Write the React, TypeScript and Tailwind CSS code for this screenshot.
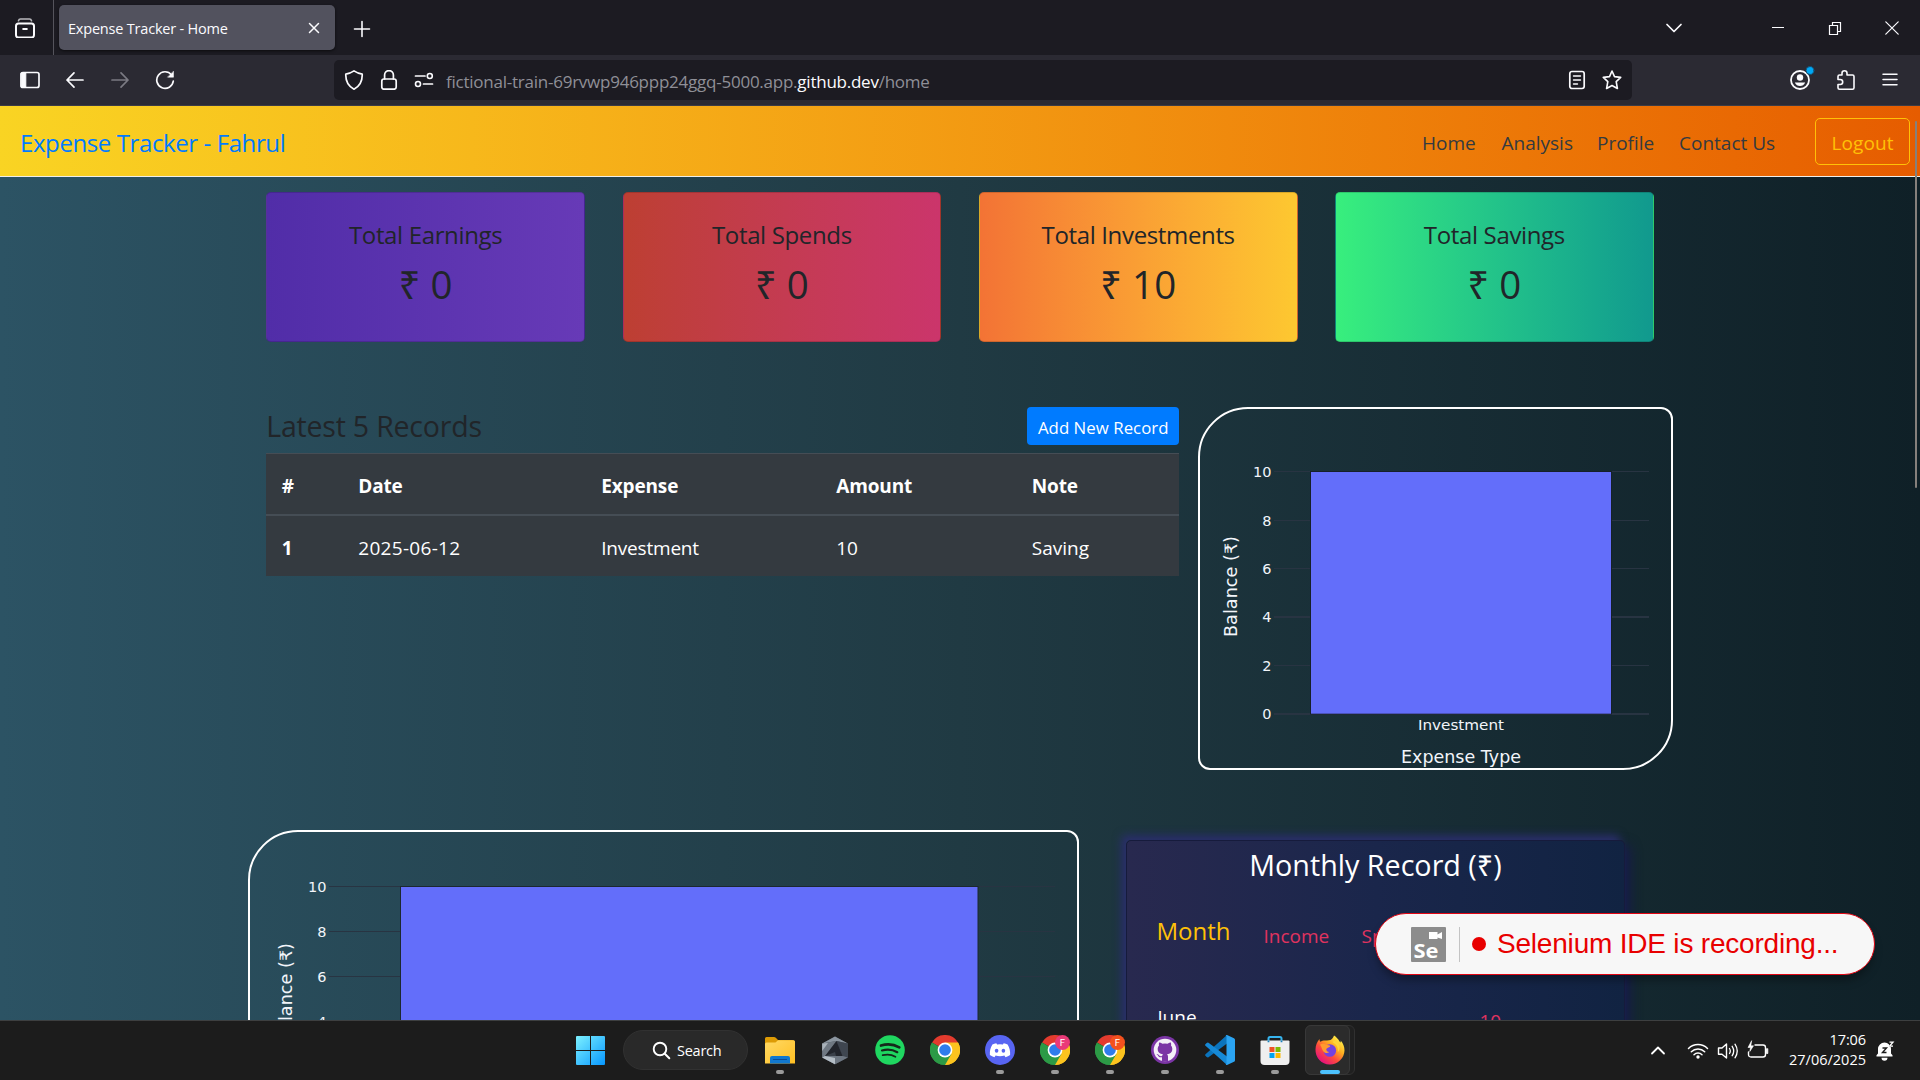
import React from "react";

const line = {
  fill: "none",
  stroke: "currentColor",
  strokeWidth: 1.6,
  strokeLinecap: "round" as const,
  strokeLinejoin: "round" as const,
};

function Icon({ size = 20, className = "", children }: { size?: number; className?: string; children: React.ReactNode }) {
  return (
    <svg width={size} height={size} viewBox={`0 0 ${size} ${size}`} className={`block shrink-0 ${className}`} {...line}>
      {children}
    </svg>
  );
}

function Slot({ className, children }: { className: string; children: React.ReactNode }) {
  return <div className={`flex shrink-0 items-center justify-center ${className}`}>{children}</div>;
}

function TabBar() {
  return (
    <div className="flex h-[55px] bg-[#1c1b22] text-[#fbfbfe]">
      <div className="flex w-[54px] shrink-0 items-center border-r border-[#55545c] pl-[15px]">
        <Icon size={20}>
          <path d="M3.5 2.8C3.8 1.6 4.3 1 5.5 1h9c1.200 0 1.700.6 2 1.800" stroke="#b9b9bd" />
          <rect x="1" y="5.500" width="18" height="14" rx="2.500" strokeWidth="2" />
          <path d="M8.200 11h3.600" strokeWidth="2" />
        </Icon>
      </div>
      <div className="mt-[5px] ml-[5px] flex h-[45px] w-[276px] items-center rounded-[5px] bg-[#52525e] pl-[9px] shadow-[0_1px_3px_rgba(0,0,0,0.6)]">
        <span className="w-[239px] pt-[2px] text-[14.5px] tracking-[-0.2px] whitespace-nowrap">Expense Tracker - Home</span>
        <Icon size={14}>
          <path d="M2.500 2.500l9 9m0-9l-9 9" strokeWidth="1.500" />
        </Icon>
      </div>
      <Slot className="ml-[16px] w-[21px]">
        <Icon size={18} className="mt-[2px]">
          <path d="M9 1.500v15M1.500 9h15" />
        </Icon>
      </Slot>
      <div className="flex-1" />
      <Slot className="mr-[84px] w-[20px]">
        <Icon size={18}>
          <path d="M2 5.500l7 7 7-7" strokeWidth="1.700" />
        </Icon>
      </Slot>
      <Slot className="mr-[37px] w-[20px]">
        <Icon size={14}>
          <path d="M1 6.500h12" strokeWidth="1" strokeLinecap="butt" />
        </Icon>
      </Slot>
      <Slot className="mr-[37px] w-[20px]">
        <Icon size={14}>
          <path d="M1.500 4.500h8v9h-8zM4.500 4.500v-3h8v9h-3" strokeWidth="1.200" strokeLinejoin="miter" />
        </Icon>
      </Slot>
      <Slot className="mr-[18px] w-[20px]">
        <Icon size={14}>
          <path d="M.8 .8l12.400 12.400m0-12.400L.8 13.200" strokeWidth="1.200" />
        </Icon>
      </Slot>
    </div>
  );
}

function AddressBar() {
  return (
    <div className="flex h-[51px] items-start border-b border-[#3c3b45] bg-[#2b2a33] text-[#fbfbfe]">
      <Slot className="ml-[20px] h-[50px] w-[20px]">
        <Icon size={20}>
          <rect x="1" y="2.500" width="18" height="15" rx="2" strokeWidth="1.700" />
          <path d="M1.500 3h4.300v14H1.500z" fill="currentColor" strokeWidth="1" />
        </Icon>
      </Slot>
      <Slot className="ml-[25px] h-[50px] w-[20px]">
        <Icon size={20}>
          <path d="M18 10H2m7-7.200L2 10l7 7.200" strokeWidth="1.700" />
        </Icon>
      </Slot>
      <Slot className="ml-[25px] h-[50px] w-[20px]">
        <Icon size={20} className="text-[#7b7a83]">
          <path d="M2 10h16M11 2.800l7 7.200-7 7.200" strokeWidth="1.700" />
        </Icon>
      </Slot>
      <Slot className="ml-[25px] h-[50px] w-[20px]">
        <Icon size={20}>
          <path d="M16.500 4.800A8.300 8.300 0 1 0 18.300 11" strokeWidth="1.700" />
          <path d="M18.500 1.500v5.700h-5.700z" fill="currentColor" strokeWidth=".5" />
        </Icon>
      </Slot>
      <div className="mt-[5px] ml-[159px] flex h-[40px] w-[1298px] items-center rounded-[5px] bg-[#1c1b22]">
        <Slot className="ml-[10px] w-[20px]">
          <Icon size={20}>
            <path d="M10 .9c2.500 1.700 5 2.800 8.200 3.300C18.500 11 16 16 10 19.200 4 16 1.500 11 1.800 4.200 5 3.700 7.500 2.600 10 .9z" strokeWidth="1.700" />
          </Icon>
        </Slot>
        <Slot className="ml-[15px] w-[20px]">
          <Icon size={20}>
            <rect x="2.800" y="9" width="14.400" height="10.200" rx="2.200" strokeWidth="1.700" />
            <path d="M5.600 9V5a4.400 4.400 0 0 1 8.800 0v4" strokeWidth="1.700" />
          </Icon>
        </Slot>
        <Slot className="ml-[15px] w-[20px]">
          <Icon size={20}>
            <path d="M1.500 6h9.500M9.500 14h9" strokeWidth="1.700" />
            <circle cx="15.800" cy="6" r="2.500" strokeWidth="1.600" />
            <circle cx="4" cy="14" r="2.500" strokeWidth="1.600" />
          </Icon>
        </Slot>
        <div className="ml-[12px] w-[1121px] pt-[3px] text-[17px] tracking-[-0.24px] whitespace-nowrap text-[#8f8f97]">
          fictional-train-69rvwp946ppp24ggq-5000.app.<span className="text-[#fbfbfe]">github.dev</span>/home
        </div>
        <Slot className="w-[20px]">
          <Icon size={20}>
            <rect x="2.800" y="1.500" width="14.400" height="17" rx="2.200" strokeWidth="1.700" />
            <path d="M6.500 6h7M6.500 10h7M6.500 14h4" strokeWidth="1.400" />
          </Icon>
        </Slot>
        <Slot className="ml-[15px] w-[20px]">
          <Icon size={20}>
            <path d="M10 1l2.500 5.600 6.200.8-4.500 4.200 1.200 6.900L10 15.500l-5.400 3 1.200-6.900L1.300 7.400l6.200-.8z" strokeWidth="1.600" />
          </Icon>
        </Slot>
      </div>
      <Slot className="ml-[156px] h-[50px] w-[24px]">
        <Icon size={26} className="-mt-[4px] ml-[4px]">
          <circle cx="11" cy="15" r="9" strokeWidth="1.800" />
          <circle cx="11" cy="12.500" r="3.200" fill="currentColor" stroke="none" />
          <path d="M5.800 17.500h10.400c-1 2.400-3 3.600-5.200 3.600s-4.200-1.200-5.200-3.600z" fill="currentColor" stroke="none" />
          <circle cx="21" cy="5.500" r="4" fill="#00a8f5" stroke="#174e70" strokeWidth="1" />
        </Icon>
      </Slot>
      <Slot className="ml-[24px] h-[50px] w-[20px]">
        <Icon size={20}>
          <path d="M2 8V6.500Q2 5 3.500 5H6V3.300a2.500 2.500 0 0 1 5 0V5h5.500Q18 5 18 6.500v11.200q0 1.500-1.500 1.500h-13Q2 19.200 2 17.700V14.500h2.200a2.300 2.300 0 0 0 0-5H2z" strokeWidth="1.600" />
        </Icon>
      </Slot>
      <Slot className="ml-[24px] h-[50px] w-[20px]">
        <Icon size={20}>
          <path d="M3 4.300h14M3 9.500h14M3 14.700h14" strokeWidth="1.500" />
        </Icon>
      </Slot>
    </div>
  );
}

function Navbar() {
  return (
    <div className="flex h-[71px] items-center border-b border-[#f1efe9] bg-linear-to-r from-[#f9d423] to-[#e65c00] text-[19px] whitespace-nowrap text-[#343a40]">
      <div className="ml-[20px] w-[1402px] pt-[3px] text-[24px] tracking-[-0.4px] text-[#007bff]">Expense Tracker - Fahrul</div>
      <div className="w-[79.500px] pt-[5px]">Home</div>
      <div className="w-[95.500px] pt-[5px]">Analysis</div>
      <div className="w-[82px] pt-[5px]">Profile</div>
      <div className="w-[136px] pt-[5px]">Contact Us</div>
      <div className="flex h-[47px] w-[95px] items-center justify-center rounded-[5px] border border-[#ffc107] pt-[5px] tracking-[0.1px] text-[#ffc107]">
        Logout
      </div>
    </div>
  );
}

const totals = [
  { title: "Total Earnings", value: "₹ 0", tone: "from-[#512da8] to-[#673ab7]" },
  { title: "Total Spends", value: "₹ 0", tone: "from-[#bd3f32] to-[#cb356b]" },
  { title: "Total Investments", value: "₹ 10", tone: "from-[#f37335] to-[#fdc830]" },
  { title: "Total Savings", value: "₹ 0", tone: "from-[#38ef7d] to-[#11998e]" },
];

function TotalCards() {
  return (
    <div className="grid grid-cols-4 gap-[37.5px] px-[18.75px] pt-[15px] text-center text-[#212529]">
      {totals.map((t) => (
        <div key={t.title} className={`h-[150px] rounded-[5px] border border-black/15 bg-linear-to-r pt-[23px] ${t.tone}`}>
          <div className="text-[24px] leading-[38px] tracking-[-0.35px]">{t.title}</div>
          <div className="text-[38.500px] leading-[60px]">{t.value}</div>
        </div>
      ))}
    </div>
  );
}

function Records() {
  const cols = "grid grid-cols-[76.500px_243px_235px_195.500px_1fr] items-center pl-[15.500px]";
  return (
    <div className="w-[913px] shrink-0">
      <div className="flex h-[46px] items-start justify-between">
        <div className="text-[28.500px] leading-[39px] tracking-[-0.2px] text-[#212529]">Latest 5 Records</div>
        <div className="flex h-[38px] w-[152px] items-center justify-center rounded-[4px] bg-[#007bff] pt-[4px] text-[16.800px] tracking-[0.05px] whitespace-nowrap text-white">
          Add New Record
        </div>
      </div>
      <div className="border-t border-[#454d55] bg-[#343a40] text-[19px] text-white">
        <div className={`h-[62px] border-b-2 border-[#454d55] pt-[4px] font-bold tracking-[-0.15px] ${cols}`}>
          <div>#</div>
          <div>Date</div>
          <div>Expense</div>
          <div>Amount</div>
          <div>Note</div>
        </div>
        <div className={`h-[60px] pt-[4px] ${cols}`}>
          <div className="font-bold">1</div>
          <div className="tracking-[0.3px]">2025-06-12</div>
          <div className="tracking-[-0.2px]">Investment</div>
          <div>10</div>
          <div>Saving</div>
        </div>
      </div>
    </div>
  );
}

const verdana = "Verdana, 'DejaVu Sans', sans-serif";

function ExpenseTypeChart() {
  const ticks: [string, number][] = [["10", 64.500], ["8", 113.500], ["6", 161.500], ["4", 210], ["2", 258.500], ["0", 307]];
  return (
    <div className="h-[363px] w-[475px] shrink-0 overflow-hidden rounded-tl-[50px] rounded-tr-[12px] rounded-br-[50px] rounded-bl-[12px] border-2 border-white">
      <svg width="475" height="363" viewBox="0 0 475 363" className="-mt-[2px] -ml-[2px] block max-w-none" fontFamily={verdana} fill="#f2f5fa">
        {ticks.map(([t, y]) => (
          <g key={t}>
            <path d={`M76 ${y}H451`} stroke="#283442" strokeWidth={t === "0" || t === "4" ? 2 : 1} />
            <text x="73.500" y={y + 5} textAnchor="end" fontSize="14.500" textLength={t === "10" ? 18.500 : 9}>{t}</text>
          </g>
        ))}
        <rect x="112.500" y="64.500" width="301" height="242.500" fill="#636efa" stroke="#16202a" strokeWidth="1" />
        <path d="M113 306.500H413" stroke="#4a53b8" />
        <text x="263" y="323" textAnchor="middle" fontSize="14.500" textLength="86" lengthAdjust="spacingAndGlyphs">Investment</text>
        <text x="263" y="356" textAnchor="middle" fontSize="17" textLength="120" lengthAdjust="spacingAndGlyphs">Expense Type</text>
        <text transform="translate(39 179.500) rotate(-90)" textAnchor="middle" fontSize="17" textLength="101" lengthAdjust="spacingAndGlyphs">Balance (₹)</text>
      </svg>
    </div>
  );
}

function MonthlyChart() {
  const ticks: [string, number][] = [["10", 56.500], ["8", 101.500], ["6", 146.500], ["4", 191.500]];
  return (
    <div className="h-[363px] w-[831px] shrink-0 overflow-hidden rounded-tl-[50px] rounded-tr-[12px] border-2 border-white">
      <svg width="831" height="363" viewBox="0 0 831 363" className="-mt-[2px] -ml-[2px] block max-w-none" fontFamily={verdana} fill="#f2f5fa">
        {ticks.map(([t, y]) => (
          <g key={t}>
            <path d={`M81 ${y}H807`} stroke="#283442" />
            <text x="78.500" y={y + 5} textAnchor="end" fontSize="14.500" textLength={t === "10" ? 18.500 : 9}>{t}</text>
          </g>
        ))}
        <rect x="152.500" y="56.500" width="577.500" height="290" fill="#636efa" stroke="#1c2830" />
        <text transform="translate(44 163.500) rotate(-90)" textAnchor="middle" fontSize="17" textLength="101" lengthAdjust="spacingAndGlyphs">Balance (₹)</text>
      </svg>
    </div>
  );
}

function MonthlyRecord() {
  return (
    <div className="mt-[10px] ml-[47px] h-[300px] w-[499px] shrink-0 rounded-[5px] border border-[#161b3c] bg-linear-to-r from-[#28294f] via-[#1a264b] to-[#112342] whitespace-nowrap shadow-[-5px_-5px_9px_#2a2f6a,5px_5px_12px_#171b4a]">
      <div className="pt-[2px] pl-px text-center text-[28.700px] leading-[43px] text-white">Monthly Record (₹)</div>
      <div className="mt-[25px] flex h-[44px] items-start pl-[30px] text-[19px] leading-[40px] text-[#e0335f]">
        <div className="w-[107px] text-[24px] text-[#ffc107]">Month</div>
        <div className="w-[98px] pt-[5px]">Income</div>
        <div className="pt-[5px]">Spend</div>
      </div>
      <div className="mt-[42px] flex items-start pl-[31px] text-[19px] leading-[40px]">
        <div className="w-[322px] text-white">June</div>
        <div className="pt-[4px] text-[#e0335f]">10</div>
      </div>
    </div>
  );
}

function RecordingBadge() {
  return (
    <div className="absolute top-[913px] left-[1375px] flex h-[62px] w-[500px] items-center rounded-full border border-[#e30613] bg-[#f7f7f7] pl-[35px] shadow-[0_7px_10px_-2px_rgba(0,0,0,0.35)]">
      <svg width="35" height="35" viewBox="0 0 35 35" className="block">
        <rect width="35" height="35" rx="1" fill="#8c8c8c" />
        <path d="M18 5h8.500v2.500l4.500-2.500v7l-4.500-1.500V12H18z" fill="#fff" />
        <text x="2.500" y="30.500" fontSize="20" fontWeight="700" fontFamily="'Open Sans', sans-serif" fill="#fff" textLength="25" lengthAdjust="spacingAndGlyphs">Se</text>
      </svg>
      <div className="ml-[13px] h-[35px] w-px bg-[#c4c4c4]" />
      <div className="ml-[12px] size-[14px] rounded-full bg-[#e80000]" />
      <div className="ml-[11px] text-[28px] tracking-[-0.2px] whitespace-nowrap text-[#e80000] [font-family:'Liberation_Sans',Arial,sans-serif]">
        Selenium IDE is recording...
      </div>
    </div>
  );
}

function ChromeIcon({ badge }: { badge?: string }) {
  return (
    <svg width="30" height="30" viewBox="0 0 30 30">
      <path d="M15 15L2 7.500A15 15 0 0 1 28 7.500z" fill="#e33b2e" />
      <path d="M15 15L28 7.500A15 15 0 0 1 15 30z" fill="#fcc31e" />
      <path d="M15 15V30A15 15 0 0 1 2 7.500z" fill="#2c9a46" />
      <path d="M15 7.500H28A15 15 0 0 1 15 30l6.500-11.200z" fill="#fcc31e" />
      <path d="M2 7.500l6.500 11.300L15 22l6.500-3.200L15 30A15 15 0 0 1 2 7.500z" fill="#2c9a46" />
      <circle cx="15" cy="15" r="7.400" fill="#fff" />
      <circle cx="15" cy="15" r="5.800" fill="#2f7cec" />
      {badge && (
        <>
          <circle cx="22.500" cy="7.500" r="7.500" fill={badge} />
          <text x="22.500" y="11" textAnchor="middle" fontSize="9.500" fontFamily="Roboto, sans-serif" fill="#fff">F</text>
        </>
      )}
    </svg>
  );
}

function FolderIcon() {
  return (
    <svg width="30" height="30" viewBox="0 0 30 30">
      <defs>
        <linearGradient id="folder" x1="0" y1="0" x2="1" y2="1">
          <stop offset="0" stopColor="#ffd965" />
          <stop offset="1" stopColor="#ffbf22" />
        </linearGradient>
      </defs>
      <path d="M0 3.500Q0 2 1.500 2H9q1 0 1.800.8L13 5H27q3 0 3 3v5H0z" fill="#dd9b05" />
      <path d="M0 9q0-1.500 1.500-1.500h9L13 5.300h15.500Q30 5.300 30 6.800V28.500H0z" fill="url(#folder)" />
      <path d="M5 28.500V23q0-2 2-2h16q2 0 2 2v5.500z" fill="#1178cf" />
      <path d="M8.500 24.500h13" stroke="#0b4c97" strokeWidth="1.200" strokeLinecap="round" />
    </svg>
  );
}

function CubeIcon() {
  return (
    <svg width="30" height="30" viewBox="0 0 30 30">
      <path d="M15 1.500L27.800 8.500v14L15 29.200 2.200 22.500v-14z" fill="#4c545e" />
      <path d="M15 1.500L27.800 8.500 16.500 6 2.200 8.500z" fill="#8b959f" />
      <path d="M2.200 8.500L16.500 6 5.500 21l-3.300 1.500z" fill="#6f7882" />
      <path d="M2.200 8.500L8 8l-5.800 8z" fill="#a9b2ba" />
      <path d="M16.500 6l11.300 2.500v14L22 20.500z" fill="#3f4650" />
      <path d="M16.500 6L22.500 21 5 21z" fill="#22252c" />
      <path d="M5 21l10-4 1.500 6z" fill="#3a4049" />
      <path d="M5 21L22.500 21l5.300 1.500L15 29.200 2.200 22.500z" fill="#6d7681" />
      <path d="M2.200 22.500L15 29.200V23L5 21z" fill="#b4bdc5" />
    </svg>
  );
}

function SpotifyIcon() {
  return (
    <svg width="30" height="30" viewBox="0 0 30 30" fill="none" stroke="#15291b" strokeLinecap="round">
      <circle cx="15" cy="15" r="14.800" fill="#1fd760" stroke="none" />
      <path d="M6 10.500c6-1.800 13-1.200 18.300 1.800" strokeWidth="2.700" />
      <path d="M7 15.500c5-1.400 10.800-.9 15.300 1.700" strokeWidth="2.200" />
      <path d="M7.700 20.200c4.200-1.100 9-.7 12.700 1.500" strokeWidth="1.800" />
    </svg>
  );
}

function DiscordIcon() {
  return (
    <svg width="30" height="30" viewBox="0 0 30 30">
      <circle cx="15" cy="15" r="15" fill="#5865f2" />
      <path d="M11.300 8.300l.8 1.300a15 15 0 0 1 5.800 0l.8-1.300c1.400.2 2.700.7 3.900 1.300 2 3.200 2.800 6.500 2.500 10.500-1.400 1.100-2.900 1.800-4.600 2.200l-1.100-1.700a14 14 0 0 1-8.800 0l-1.100 1.700c-1.700-.4-3.200-1.100-4.600-2.200-.3-4 .5-7.300 2.500-10.500a13 13 0 0 1 3.900-1.300z" fill="#fff" />
      <ellipse cx="11.600" cy="15.700" rx="1.800" ry="2" fill="#5865f2" />
      <ellipse cx="18.400" cy="15.700" rx="1.800" ry="2" fill="#5865f2" />
    </svg>
  );
}

function GithubIcon() {
  return (
    <svg width="30" height="30" viewBox="0 0 30 30">
      <circle cx="15" cy="15" r="14" fill="#7b35a5" />
      <circle cx="15" cy="15" r="11.300" fill="#f4f0f7" />
      <path d="M12 26v-3.800c-2.500.5-3.500-.6-4.200-2l-1.300-1.100c1.300-.3 2 .7 2.700 1.500.8.9 1.900.8 2.900.4.100-.8.500-1.300.9-1.700-3.200-.4-5.300-1.800-5.300-5.300 0-1.400.5-2.500 1.300-3.400-.3-1-.2-2.300.2-3.200 1.200 0 2.300.7 3.200 1.300a11 11 0 0 1 5.200 0c.9-.6 2-1.300 3.200-1.300.4.900.5 2.200.2 3.200.8.900 1.300 2 1.300 3.400 0 3.500-2.100 4.900-5.300 5.300.6.500 1 1.300 1 2.500V26q-3 .8-6 0z" fill="#7b35a5" />
    </svg>
  );
}

function CodeIcon() {
  return (
    <svg width="30" height="30" viewBox="0 0 30 30">
      <path d="M22 0L22 8.500 3.500 22.300Q2.500 22.800 1.700 22L.4 20.800Q-.3 20 .5 19.200z" fill="#0b74bd" />
      <path d="M22 30V21.500L3.500 7.700Q2.500 7.200 1.700 8L.4 9.200Q-.3 10 .5 10.800z" fill="#1689d6" />
      <path d="M22 0l7 3.200q1 .5 1 1.600v20.400q0 1.100-1 1.600L22 30q-.8.200-1.300-.5l.8-.5V1l-.8-.5Q21.200-.2 22 0z" fill="#2ba4f2" />
    </svg>
  );
}

function StoreIcon() {
  return (
    <svg width="30" height="30" viewBox="0 0 30 30">
      <path d="M8.500 7V3.500Q8.500 2 10 2h10q1.500 0 1.500 1.500V7" fill="none" stroke="#36b4ee" strokeWidth="2" />
      <path d="M.5 6.500Q.5 5.500 1.500 5.500h27q1 0 1 1V26q0 4-4 4h-21q-4 0-4-4z" fill="#efefef" />
      <path d="M8.500 5.500v1.800M21.500 5.500v1.800" stroke="#1a7fb8" strokeWidth="1.800" />
      <path d="M9.500 12h5v5h-5z" fill="#f05123" />
      <path d="M15.500 12h5v5h-5z" fill="#7eb900" />
      <path d="M9.500 18h5v5h-5z" fill="#01a3ee" />
      <path d="M15.500 18h5v5h-5z" fill="#fdb800" />
    </svg>
  );
}

function FirefoxIcon() {
  return (
    <svg width="30" height="30" viewBox="0 0 30 30">
      <defs>
        <linearGradient id="fox" x1=".85" y1=".1" x2=".2" y2=".9">
          <stop offset="0" stopColor="#fff14a" />
          <stop offset=".35" stopColor="#ffab1f" />
          <stop offset=".65" stopColor="#ff4b3d" />
          <stop offset="1" stopColor="#e6137c" />
        </linearGradient>
      </defs>
      <path d="M19 .5c4.500 3 5 5.500 6.500 7 .3-.8.300-1.500.2-2 2.500 2.500 3.800 6.500 3.800 10A14.500 14.500 0 1 1 .5 14.500C.6 10.500 2 6.500 4.500 4c0 1.300.2 2 .8 2.800C7 5.700 9 5.300 11 5.500c2 .2 3.500-.2 4.500-.5 1.500-1 2.800-2.500 3.500-4.500z" fill="url(#fox)" />
      <circle cx="14.800" cy="15.500" r="6.300" fill="#7542e0" />
      <path d="M5 9.500c2.500-1 4.500-.8 6 .2 1.600.3 4 .6 4.300 1.300-.4 1.500-3.500 1.800-4 3-.3 1.500 1 3 3 3-1.800 2-5 1-6.300-1C7 14 6.500 12 5 9.500z" fill="#ff9a2e" />
      <path d="M18 7.500c3.500 1.500 5.500 5 4.800 9.500 1.500-1 2.200-3.500 1.700-6-.8-3-3.500-5-6-5z" fill="#ffd53a" />
    </svg>
  );
}

function WindowsIcon() {
  return (
    <svg width="29" height="29" viewBox="0 0 29 29">
      <defs>
        <linearGradient id="win" x1="0" y1="0" x2="29" y2="29" gradientUnits="userSpaceOnUse">
          <stop offset="0" stopColor="#7df1ff" />
          <stop offset="1" stopColor="#0797ff" />
        </linearGradient>
      </defs>
      <path d="M0 1q0-1 1-1h13v14H0zM15 0h13q1 0 1 1v13H15zM0 15h14v14H1q-1 0-1-1zM15 15h14v13q0 1-1 1H15z" fill="url(#win)" />
    </svg>
  );
}

const apps: { node: React.ReactNode; running?: boolean }[] = [
  { node: <FolderIcon />, running: true },
  { node: <CubeIcon /> },
  { node: <SpotifyIcon /> },
  { node: <ChromeIcon /> },
  { node: <DiscordIcon />, running: true },
  { node: <ChromeIcon badge="#ea3a78" />, running: true },
  { node: <ChromeIcon badge="#f4511e" />, running: true },
  { node: <GithubIcon />, running: true },
  { node: <CodeIcon />, running: true },
  { node: <StoreIcon />, running: true },
];

function Taskbar() {
  return (
    <div className="flex h-[60px] items-start border-t border-[#3d3f40] bg-[#1c1c1c] text-white">
      <div className="mt-[15px] ml-[576px]"><WindowsIcon /></div>
      <div className="mt-[9px] ml-[18px] flex h-[40px] w-[125px] items-center rounded-full border border-[#313131] bg-[#292929] pl-[28px]">
        <Icon size={19}>
          <circle cx="8" cy="8" r="6.300" strokeWidth="1.900" />
          <path d="M12.800 12.800l4.500 4.500" strokeWidth="2" />
        </Icon>
        <span className="ml-[6px] pt-[2px] text-[14.500px] tracking-[-0.25px]">Search</span>
      </div>
      <div className="ml-[4.500px] flex">
        {apps.map((a, i) => (
          <div key={i} className="flex h-[59px] w-[55px] flex-col items-center pt-[14px]">
            {a.node}
            {a.running && <div className="mt-[5px] h-[4px] w-[8px] rounded-full bg-[#9a9a9a]" />}
          </div>
        ))}
      </div>
      <div className="mt-[4px] ml-[2.500px] h-[50px] w-[50px] rounded-[6px] border border-[#303030] bg-[#202020]">
        <div className="-mt-px -ml-px flex h-[50px] w-[45px] flex-col items-center rounded-[6px] border border-[#383838] bg-[#2b2b2b] pt-[9px] pl-[4px]">
          <FirefoxIcon />
          <div className="mt-[5px] h-[4px] w-[20px] rounded-full bg-[#4cc2ff]" />
        </div>
      </div>
      <div className="flex-1" />
      <Slot className="h-[59px] w-[20px]">
        <Icon size={16}>
          <path d="M2 10.500l6-6 6 6" strokeWidth="1.800" />
        </Icon>
      </Slot>
      <Slot className="ml-[20px] h-[59px] w-[20px]">
        <Icon size={22}>
          <path d="M1.500 8.500a13.500 13.500 0 0 1 19 0M4.300 11.700a9.500 9.500 0 0 1 13.400 0M7 14.700a5.700 5.700 0 0 1 8 0" strokeWidth="1.500" />
          <circle cx="11" cy="17" r="1.700" fill="currentColor" stroke="none" />
        </Icon>
      </Slot>
      <Slot className="ml-[10px] h-[59px] w-[20px]">
        <Icon size={22}>
          <path d="M1.500 8h3.500L9.500 4v14L5 14.200H1.500z" strokeWidth="1.400" />
          <path d="M12.500 8.500q1.600 2.500 0 5M15.200 6.300q3 4.700 0 9.400M18 4.200q4.500 6.800 0 13.600" strokeWidth="1.300" />
        </Icon>
      </Slot>
      <Slot className="ml-[10px] h-[59px] w-[20px]">
        <Icon size={22}>
          <path d="M8 5h8q2.500 0 2.500 2.500v7q0 2.500-2.500 2.500H4q-2.500 0-2.500-2.500V12" strokeWidth="1.400" />
          <path d="M19.500 9v4.500h1.300V9z" fill="currentColor" strokeWidth=".8" />
          <path d="M4.500 1L1 7.500h2.500L2.800 11.500 6.500 5.800H4z" fill="currentColor" strokeWidth=".6" />
        </Icon>
      </Slot>
      <div className="mt-[9px] w-[98px] text-right text-[14.500px] leading-[20px] whitespace-nowrap">
        <div className="tracking-[-0.1px]">17:06</div>
        <div>27/06/2025</div>
      </div>
      <Slot className="mr-[25px] ml-[9px] h-[59px] w-[20px]">
        <svg width="20" height="20" viewBox="0 0 20 20">
          <path d="M1.500 15.500v-1.200L3 12.500V8a6.500 6.500 0 0 1 13 0v4.500l1.500 1.800v1.200zM6.500 16.800h6a3 3 0 0 1-6 0z" fill="#fff" />
          <path d="M7.500 7h4l-4 4.500h4" fill="none" stroke="#1c1c1c" strokeWidth="1.400" />
          <path d="M13.500 0h6.500v6h-5.500z" fill="#1c1c1c" />
          <path d="M14.500 1.200h3.500l-3.500 4h3.500" fill="none" stroke="#fff" strokeWidth="1.300" />
        </svg>
      </Slot>
    </div>
  );
}

export default function App() {
  return (
    <div className="relative flex h-[1080px] w-[1920px] flex-col overflow-hidden [font-family:'Open_Sans','Noto_Sans',sans-serif]">
      <TabBar />
      <AddressBar />
      <div className="relative h-[914px] overflow-hidden bg-linear-to-r from-[#2c5364] via-[#203a43] to-[#0f2027]">
        <Navbar />
        <div className="mx-auto w-[1425px]">
          <TotalCards />
          <div className="mt-[65px] flex justify-between pl-[18.75px]">
            <Records />
            <ExpenseTypeChart />
          </div>
          <div className="mt-[60px] flex">
            <MonthlyChart />
            <MonthlyRecord />
          </div>
        </div>
        <div className="absolute top-[15px] right-[3px] h-[367px] w-[2px] rounded-full bg-[#85807c]" />
      </div>
      <Taskbar />
      <RecordingBadge />
    </div>
  );
}
